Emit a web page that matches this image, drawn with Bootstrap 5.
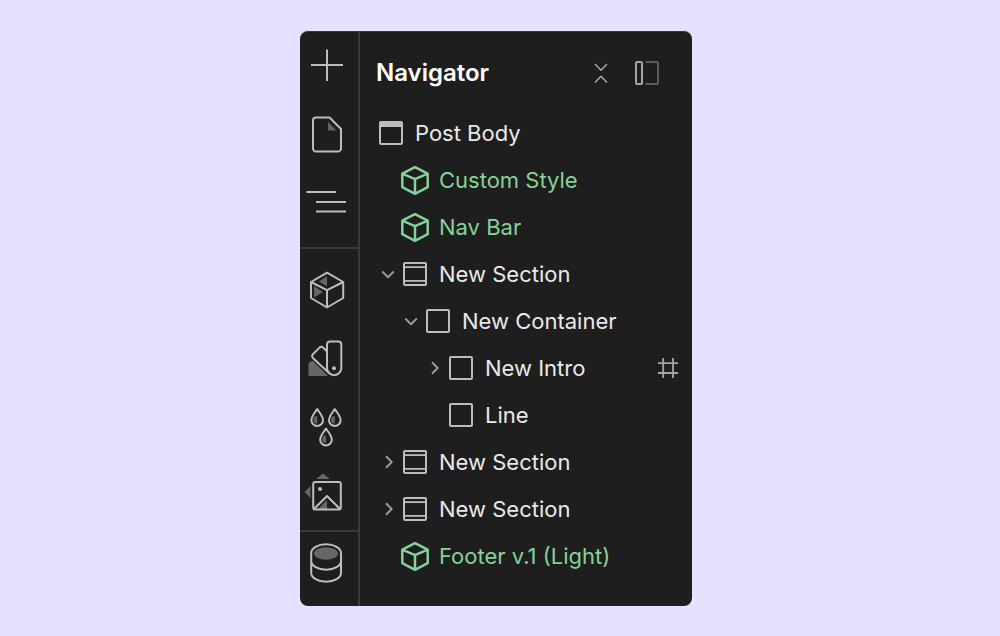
<!DOCTYPE html>
<html lang="en">
<head>
<meta charset="utf-8">
<meta name="viewport" content="width=device-width, initial-scale=1">
<title>Navigator</title>
<link href="https://cdn.jsdelivr.net/npm/bootstrap@5.3.0/dist/css/bootstrap.min.css" rel="stylesheet">
<style>
  body { background: #e6e1ff; font-family: Inter, "Liberation Sans", sans-serif; }
  main { padding: 31px 24px 30px 16px; }
  .editor { max-width: 392px; background: #1e1e1e; border-top: 1px solid #38383c; border-radius: 8px; color: #e9e9e9; }
  .rail { width: 60px; border-right: 2px solid #3a3a3a; padding-bottom: 12px; }
  .rail-group + .rail-group { border-top: 2px solid #3a3a3a; }
  .rail-top { padding-bottom: 11px; }
  .rail-mid { padding: 7px 0 2px; }
  .rail button, .plain-btn { display: block; padding: 0; border: 0; background: none; color: #bdbdbd; }
  svg { display: block; fill: none; stroke: currentColor; stroke-width: 2; stroke-linejoin: round; }
  svg .shade { fill: #666; stroke: none; }
  svg .solid { fill: currentColor; stroke: none; }
  .head { height: 77px; padding: 4px 32px 0 16px; gap: 26px; }
  .head h1 { font-size: 24px; font-weight: 600; line-height: 32px; color: #fff; }
  .tree { padding-left: 16px; }
  .tree ul ul { padding-left: 23px; }
  .item { height: 47px; padding-right: 13px; font-size: 22px; line-height: 32px; }
  .slot { width: 24px; flex: none; }
  .slot svg { margin: 0 auto; stroke: #999; }
  .kind { margin-right: 9px; flex: none; color: #bdbdbd; }
  .linked, .linked .kind { color: #85d296; }
  .item .anchor { color: #a6a6a6; }
  .head .plain-btn { color: #a6a6a6; }
</style>
</head>
<body>
<svg width="0" height="0" class="position-absolute" aria-hidden="true">
  <symbol id="cube" viewBox="0 0 30 30"><path stroke-width="2.5" d="M15 2.2 27.7 8.6V22.2L15 28.8 2.3 22.2V8.6ZM2.3 8.6 15 14.2 27.7 8.6M15 14.2V28.8"/></symbol>
  <symbol id="page" viewBox="0 0 30 30"><rect x="4" y="4" width="22" height="22" rx="1"/><path class="solid" d="M4 3.5H26V9H4z"/></symbol>
  <symbol id="section" viewBox="0 0 30 30"><rect x="4" y="4" width="22" height="22" rx="1"/><path stroke-width="1.8" d="M4 8.2H26M4 21.8H26"/></symbol>
  <symbol id="box" viewBox="0 0 30 30"><rect x="4" y="4" width="22" height="22" rx="1"/></symbol>
  <symbol id="open" viewBox="0 0 14 14"><path d="M1.2 4.5 7 10.2 12.8 4.5"/></symbol>
  <symbol id="closed" viewBox="0 0 14 14"><path d="M5 1.2 10.7 7 5 12.8"/></symbol>
</svg>
<main class="d-flex justify-content-center min-vh-100 align-items-start">
  <div class="editor d-flex w-100 overflow-hidden">
    <nav class="rail flex-shrink-0" aria-label="Tools">
      <div class="rail-group rail-top">
        <button type="button" aria-label="Add"><svg width="58" height="68"><path d="M11 33H43M27 17.5V49"/></svg></button>
        <button type="button" aria-label="Pages"><svg width="58" height="68"><path d="M16 17.5H29.5L41 29V48.5a3 3 0 0 1-3 3H16a3 3 0 0 1-3-3V20.5a3 3 0 0 1 3-3z"/><path class="shade" d="M28 22V30.5H36.5z"/></svg></button>
        <button type="button" aria-label="Navigator"><svg width="58" height="68"><path d="M6.5 24H36M16 34H46M16 43.5H46"/></svg></button>
      </div>
      <div class="rail-group rail-mid">
        <button type="button" aria-label="Components"><svg width="58" height="68"><path class="shade" d="M19 25.5 27 20V30.5zM14 30V41.5L23 36z"/><path d="M27 16.7 43.2 26V42L27 51.5 11 42V26ZM11 26 27 34.2 43.2 26M27 34.2V51.5"/></svg></button>
        <button type="button" aria-label="Variables"><svg width="58" height="68"><path class="shade" d="M8.500 52V41Q8.500 37 13 37L28 52z"/><path d="M30 17.500h8.300a3 3 0 0 1 3 3V44a7.150 7.150 0 0 1-14.300 0V20.500a3 3 0 0 1 3-3zM27 27.500 23.200 23.600a2.600 2.600 0 0 0-3.700 0L12.900 30.200a2.600 2.600 0 0 0 0 3.700L29.500 49.500"/><circle class="solid" cx="34" cy="44.200" r="2"/></svg></button>
        <button type="button" aria-label="Styles"><svg width="58" height="68"><path d="M17.200 17c2.200 3.800 5.800 6.800 5.800 11.200a5.800 5.800 0 0 1-11.600 0c0-4.400 3.600-7.400 5.800-11.200zM34.800 17c2.200 3.800 5.800 6.800 5.800 11.200a5.800 5.800 0 0 1-11.600 0c0-4.400 3.600-7.400 5.800-11.200zM26 36.500c2.200 3.800 5.800 6.800 5.800 11.200a5.800 5.800 0 0 1-11.600 0c0-4.400 3.600-7.400 5.800-11.200z"/><path class="shade" d="M17.200 24v7.500a3.500 3.500 0 0 1 0-7.500zM34.800 24v7.500a3.500 3.500 0 0 1 0-7.500zM26 43.500v7.500a3.500 3.500 0 0 1 0-7.500z"/></svg></button>
        <button type="button" aria-label="Assets"><svg width="58" height="68"><path class="shade" d="M16 19 23 13.500 30 19zM10.500 26V38L4.500 32zM18 49 27 40V49z"/><rect x="13.200" y="22" width="27.600" height="27.500" rx="2"/><path d="M14 49 27 36 40 49"/><circle class="solid" cx="20" cy="29" r="2"/></svg></button>
      </div>
      <div class="rail-group">
        <button type="button" aria-label="CMS"><svg width="58" height="62"><ellipse class="shade" cx="26" cy="21.500" rx="12" ry="6.200"/><path d="M11.200 21c0-4.700 6.600-8.700 14.900-8.700S41 16.300 41 21V41c0 4.700-6.600 8.700-14.900 8.700S11.200 45.700 11.200 41zM11.200 29c0 4.700 6.600 8.700 14.900 8.700S41 33.700 41 29"/></svg></button>
      </div>
    </nav>
    <section class="flex-grow-1">
      <header class="head d-flex align-items-center">
        <h1 class="m-0 me-auto">Navigator</h1>
        <button type="button" class="plain-btn" aria-label="Collapse all"><svg width="14" height="22"><path stroke-width="1.600" d="M1 2 7 8.200 13 2M1 20.500 7 14.300 13 20.500"/></svg></button>
        <button type="button" class="plain-btn" aria-label="Dock panel"><svg width="26" height="26" viewBox="0 0 26 26"><rect x="2" y="2" width="6" height="22" rx="1"/><path stroke="#5c5c5c" d="M11.500 2H23a1 1 0 0 1 1 1V23a1 1 0 0 1-1 1H11.500"/></svg></button>
      </header>
      <div class="tree">
        <div class="item d-flex align-items-center"><svg class="kind" width="30" height="30"><use href="#page"/></svg>Post Body</div>
        <ul class="list-unstyled m-0">
          <li class="item linked d-flex align-items-center"><span class="slot"></span><svg class="kind" width="30" height="30"><use href="#cube"/></svg>Custom Style</li>
          <li class="item linked d-flex align-items-center"><span class="slot"></span><svg class="kind" width="30" height="30"><use href="#cube"/></svg>Nav Bar</li>
          <li>
            <div class="item d-flex align-items-center"><button type="button" class="plain-btn slot" aria-label="Collapse section"><svg width="14" height="14"><use href="#open"/></svg></button><svg class="kind" width="30" height="30"><use href="#section"/></svg>New Section</div>
            <ul class="list-unstyled m-0">
              <li>
                <div class="item d-flex align-items-center"><button type="button" class="plain-btn slot" aria-label="Collapse container"><svg width="14" height="14"><use href="#open"/></svg></button><svg class="kind" width="30" height="30"><use href="#box"/></svg>New Container</div>
                <ul class="list-unstyled m-0">
                  <li class="item d-flex align-items-center"><button type="button" class="plain-btn slot" aria-label="Expand intro"><svg width="14" height="14"><use href="#closed"/></svg></button><svg class="kind" width="30" height="30"><use href="#box"/></svg>New Intro<svg class="anchor ms-auto" width="22" height="22"><path stroke-width="1.800" d="M6.200 1V21M16 1V21M1 6.200H21M1 16H21"/></svg></li>
                  <li class="item d-flex align-items-center"><span class="slot"></span><svg class="kind" width="30" height="30"><use href="#box"/></svg>Line</li>
                </ul>
              </li>
            </ul>
          </li>
          <li class="item d-flex align-items-center"><button type="button" class="plain-btn slot" aria-label="Expand section"><svg width="14" height="14"><use href="#closed"/></svg></button><svg class="kind" width="30" height="30"><use href="#section"/></svg>New Section</li>
          <li class="item d-flex align-items-center"><button type="button" class="plain-btn slot" aria-label="Expand section"><svg width="14" height="14"><use href="#closed"/></svg></button><svg class="kind" width="30" height="30"><use href="#section"/></svg>New Section</li>
          <li class="item linked d-flex align-items-center"><span class="slot"></span><svg class="kind" width="30" height="30"><use href="#cube"/></svg>Footer v.1 (Light)</li>
        </ul>
      </div>
    </section>
  </div>
</main>
<script src="https://cdn.jsdelivr.net/npm/bootstrap@5.3.0/dist/js/bootstrap.bundle.min.js"></script>
</body>
</html>
